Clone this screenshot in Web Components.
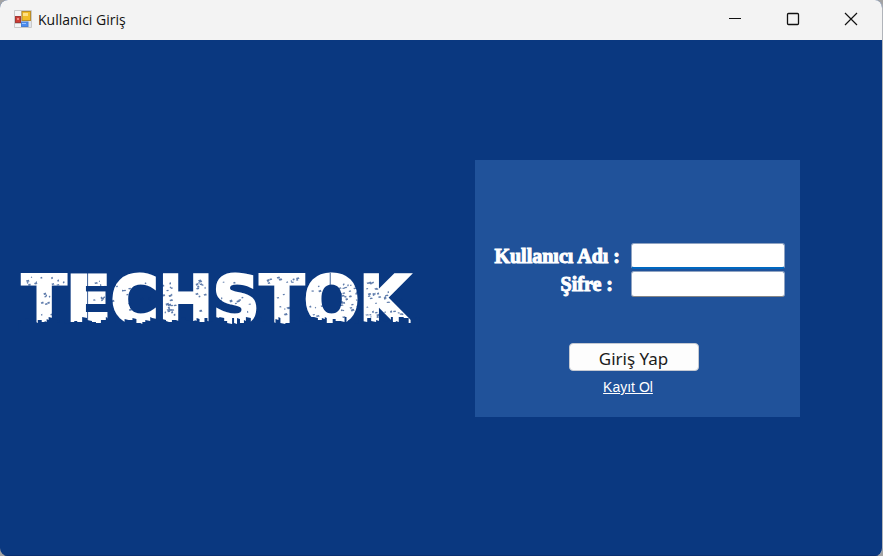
<!DOCTYPE html>
<html lang="tr">
<head>
<meta charset="utf-8">
<meta name="viewport" content="width=device-width, initial-scale=1">
<title>Kullanici Giriş</title>
<style>
  body { margin: 0; background: #a3a3a3; font-family: "Liberation Sans", Arial, sans-serif; }
</style>
</head>
<body>
<app-window>
  <title-bar slot="bar">Kullanici Giriş</title-bar>
  <brand-logo slot="brand">TECHSTOK</brand-logo>
  <login-panel slot="panel">
    <text-field label="Kullanıcı Adı :" kind="text" active></text-field>
    <text-field label="Şifre :" kind="password"></text-field>
  </login-panel>
</app-window>

<script>
class AppWindow extends HTMLElement {
  constructor() {
    super();
    this.attachShadow({ mode: "open" }).innerHTML = `
      <style>
        :host { display: flex; flex-direction: column; box-sizing: border-box; min-height: 100vh;
          background: #0a3880; border-right: 1px solid #b0b4ba; border-radius: 8px; overflow: hidden; }
        main { flex: 1; display: grid; grid-template-columns: 475fr 325fr 82fr; align-items: center;
          border-bottom: 1px solid #092f70; }
        .panel { padding-bottom: 18px; }
      </style>
      <slot name="bar"></slot>
      <main>
        <slot name="brand"></slot>
        <div class="panel"><slot name="panel"></slot></div>
      </main>`;
  }
}

class TitleBar extends HTMLElement {
  constructor() {
    super();
    this.attachShadow({ mode: "open" }).innerHTML = `
      <style>
        :host { display: flex; align-items: center; height: 40px; background: #f3f3f3; color: #111;
          font: 14px/20px "Open Sans", "Noto Sans", sans-serif; }
        .icon { width: 18px; height: 18px; margin: 0 6px 2px 14px; }
        .text { flex: 1; }
        button { width: 58px; height: 38px; margin: 0 0 2px; padding: 0; border: 0; background: none;
          display: grid; place-items: center; }
        button:last-child { margin-right: 2px; }
        button svg { width: 14px; height: 14px; fill: none; stroke: #111; }
      </style>
      <svg class="icon" viewBox="0 0 18 18" aria-hidden="true">
        <rect width="18" height="18" rx="1" fill="#c9c9c9"/>
        <path d="M1 1h6v5H1zM1 14h6v3H1z" fill="#f4f4f4"/>
        <path d="M7 11h10v6H7z" fill="#dfe3ea"/>
        <rect x="8" y="1.500" width="8.500" height="9" fill="#f2bd27" stroke="#b98d2a"/>
        <path d="M9 3h5v3H9z" fill="#ffe083"/>
        <rect x="1.500" y="6.500" width="5" height="6" fill="#ce3c34" stroke="#a23a36"/>
        <path d="M3 8h2v2H3z" fill="#ef8b80"/>
        <rect x="7.500" y="12" width="6.500" height="4.500" fill="#4b8cf0" stroke="#4a7fd2"/>
        <path d="M8 13h4v1H8z" fill="#9cc4ff"/>
      </svg>
      <span class="text"><slot></slot></span>
      <button type="button" aria-label="Simge durumuna küçült"><svg viewBox="0 0 14 14"><path d="M1 6.500h12"/></svg></button>
      <button type="button" aria-label="Ekranı kapla"><svg viewBox="0 0 14 14"><rect x="1.500" y="1.500" width="11" height="11" rx="1" stroke-width="1.300"/></svg></button>
      <button type="button" aria-label="Kapat"><svg viewBox="0 0 14 14"><path d="M1 1l12 12M13 1L1 13" stroke-width="1.200"/></svg></button>`;
  }
}

class BrandLogo extends HTMLElement {
  constructor() {
    super();
    this.attachShadow({ mode: "open" }).innerHTML = `
      <style>
        :host { display: block; padding: 6px 0 0 22px; color: #fff; }
        .mark { position: relative; width: max-content; font: bold 65px/60px "DejaVu Sans", sans-serif;
          -webkit-text-stroke: 3px #fff; }
        svg { position: absolute; inset: 0; width: 100%; height: 100%; overflow: visible; }
      </style>
      <div class="mark"><slot></slot><svg viewBox="0 0 393 60" preserveAspectRatio="none" fill="#0a3880" aria-hidden="true"></svg></div>`;
    // Distressed look: skyline bite along the foot of the letters plus scattered chips.
    let seed = 11;
    const rnd = () => (seed = (seed * 16807) % 2147483647) / 2147483647;
    let edge = "M-4 62";
    for (let x = -4; x < 402;) {
      const w = 2 + Math.floor(rnd() * 4), y = 46 + Math.floor(rnd() * 7);
      edge += `L${x} ${y}L${x + w} ${y + Math.floor(rnd() * 2)}`;
      x += w;
    }
    edge += "L402 62Z";
    let chips = "";
    const zones = [[2, 6, 42, 8, 12], [18, 22, 14, 22, 12], [70, 8, 26, 8, 8], [70, 25, 22, 8, 8], [96, 10, 34, 36, 12],
      [142, 9, 12, 36, 24], [174, 9, 14, 36, 14], [197, 9, 38, 36, 14], [241, 6, 42, 8, 12],
      [256, 22, 14, 22, 8], [288, 9, 20, 36, 10], [320, 12, 20, 34, 32], [347, 9, 14, 40, 26], [362, 20, 26, 26, 16]];
    for (const [zx, zy, zw, zh, n] of zones) {
      for (let i = 0; i < n; i++) {
        const x = zx + rnd() * zw, y = zy + rnd() * zh, a = 1 + rnd() * 2, b = 1 + rnd();
        chips += `M${x.toFixed(1)} ${y.toFixed(1)}l${a.toFixed(1)} ${(-b / 2).toFixed(1)}l${(a / 3).toFixed(1)} ${b.toFixed(1)}l${(-a).toFixed(1)} ${(b / 3).toFixed(1)}z`;
      }
    }
    this.shadowRoot.querySelector("svg").innerHTML =
      `<path d="${edge}"/><path d="${chips}" opacity=".65"/><path d="M312 2h1v16h-1zM66 2h1v54h-1z" opacity=".8"/>`;
  }
}

class TextField extends HTMLElement {
  connectedCallback() {
    if (this.shadowRoot) return;
    this.attachShadow({ mode: "open" }).innerHTML = `
      <style>
        :host { display: grid; grid-template-columns: 1fr 154px; column-gap: 11px; align-items: center; }
        label { text-align: right; white-space: pre; color: #fff;
          font: bold 20px/24px "Liberation Serif", "Times New Roman", serif; -webkit-text-stroke: 1px #fff; }
        input { box-sizing: border-box; width: 100%; height: 26px; padding: 2px 4px; background: #fff;
          border: 1px solid #8fa3c2; border-bottom-color: #868686; border-radius: 3px; outline: 0;
          font: 16px/20px "Liberation Sans", sans-serif; }
        :host([active]) input { border-bottom: 2px solid #0067c0; }
        :host(:not([active])) label { padding-right: 7px; }
      </style>
      <label for="f">${this.getAttribute("label")}</label>
      <input id="f" type="${this.getAttribute("kind")}">`;
  }
}

class LoginPanel extends HTMLElement {
  constructor() {
    super();
    this.attachShadow({ mode: "open" }).innerHTML = `
      <style>
        :host { display: block; background: #20529a; }
        form { display: flex; flex-direction: column; padding: 83px 15px 20px; }
        .fields { display: grid; gap: 2px; }
        .actions { display: flex; flex-direction: column; align-items: center; gap: 6px;
          padding-right: 8px; margin-top: 46px; }
        button { width: 130px; height: 28px; padding: 3px 0 0; overflow: hidden; background: #fdfdfd;
          border: 1px solid #c4c9d2; border-radius: 4px; color: #1b1b1b;
          font: 17px/24px "Noto Sans", sans-serif; }
        a { margin-right: 11px; color: #fff; font: 14px/20px "Liberation Sans", Arial, sans-serif; }
      </style>
      <form>
        <div class="fields"><slot></slot></div>
        <div class="actions">
          <button type="button">Giriş Yap</button>
          <a href="#">Kayıt Ol</a>
        </div>
      </form>`;
  }
}

customElements.define("app-window", AppWindow);
customElements.define("title-bar", TitleBar);
customElements.define("brand-logo", BrandLogo);
customElements.define("text-field", TextField);
customElements.define("login-panel", LoginPanel);
</script>
</body>
</html>
